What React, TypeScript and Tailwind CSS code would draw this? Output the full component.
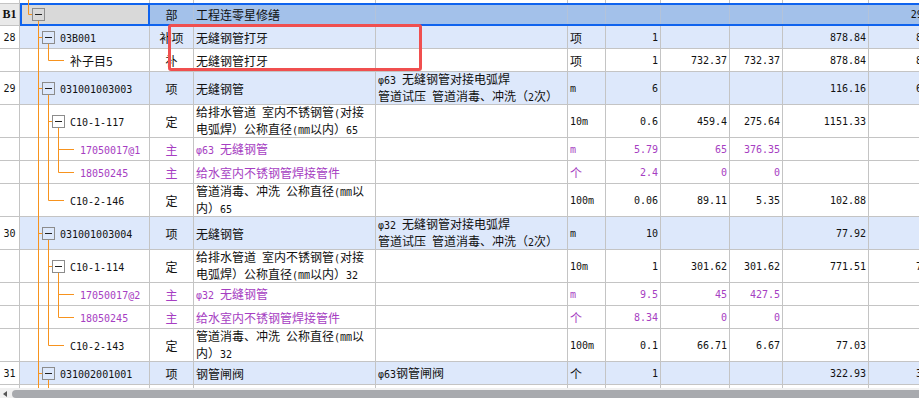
import React from 'react';

type Row = {
  no?: string;
  level: number;
  box?: boolean;
  pass: number[];
  code: string;
  type: string;
  name: string[];
  spec?: string[];
  unit: string;
  qty: string;
  price?: string;
  cost?: string;
  total?: string;
  tail?: string;
  tall?: boolean;
  item?: boolean;
  main?: boolean;
};

const rows: Row[] = [
  { no: '28', level: 1, box: true, pass: [0], code: '03B001', type: '补项', name: ['无缝钢管打牙'], unit: '项', qty: '1', total: '878.84', tail: '878.84', item: true },
  { level: 2, pass: [0], code: '补子目5', type: '补', name: ['无缝钢管打牙'], unit: '项', qty: '1', price: '732.37', cost: '732.37', total: '878.84', tail: '878.84' },
  { no: '29', level: 1, box: true, pass: [0], code: '031001003003', type: '项', name: ['无缝钢管'], spec: ['φ63 无缝钢管对接电弧焊', '管道试压 管道消毒、冲洗（2次）'], unit: 'm', qty: '6', total: '116.16', tail: '696.96', tall: true, item: true },
  { level: 2, box: true, pass: [0, 1], code: 'C10-1-117', type: '定', name: ['给排水管道 室内不锈钢管(对接', '电弧焊）公称直径(㎜以内）65'], unit: '10m', qty: '0.6', price: '459.4', cost: '275.64', total: '1151.33', tail: '690.8', tall: true },
  { level: 3, pass: [0, 1, 2], code: '17050017@1', type: '主', name: ['φ63 无缝钢管'], unit: 'm', qty: '5.79', price: '65', cost: '376.35', main: true },
  { level: 3, pass: [0, 1], code: '18050245', type: '主', name: ['给水室内不锈钢管焊接管件'], unit: '个', qty: '2.4', price: '0', cost: '0', main: true },
  { level: 2, pass: [0], code: 'C10-2-146', type: '定', name: ['管道消毒、冲洗 公称直径(㎜以', '内）65'], unit: '100m', qty: '0.06', price: '89.11', cost: '5.35', total: '102.88', tail: '6.17', tall: true },
  { no: '30', level: 1, box: true, pass: [0], code: '031001003004', type: '项', name: ['无缝钢管'], spec: ['φ32 无缝钢管对接电弧焊', '管道试压 管道消毒、冲洗（2次）'], unit: 'm', qty: '10', total: '77.92', tail: '779.2', tall: true, item: true },
  { level: 2, box: true, pass: [0, 1], code: 'C10-1-114', type: '定', name: ['给排水管道 室内不锈钢管(对接', '电弧焊）公称直径(㎜以内）32'], unit: '10m', qty: '1', price: '301.62', cost: '301.62', total: '771.51', tail: '771.51', tall: true },
  { level: 3, pass: [0, 1, 2], code: '17050017@2', type: '主', name: ['φ32 无缝钢管'], unit: 'm', qty: '9.5', price: '45', cost: '427.5', main: true },
  { level: 3, pass: [0, 1], code: '18050245', type: '主', name: ['给水室内不锈钢管焊接管件'], unit: '个', qty: '8.34', price: '0', cost: '0', main: true },
  { level: 2, pass: [0], code: 'C10-2-143', type: '定', name: ['管道消毒、冲洗 公称直径(㎜以', '内）32'], unit: '100m', qty: '0.1', price: '66.71', cost: '6.67', total: '77.03', tail: '7.7', tall: true },
  { no: '31', level: 1, box: true, pass: [0], code: '031002001001', type: '项', name: ['钢管闸阀'], spec: ['φ63钢管闸阀'], unit: '个', qty: '1', total: '322.93', tail: '322.93', item: true },
];

const ORANGE = '#f7931e';
const indent = ['pl-[30px]', 'pl-[40px]', 'pl-[50px]', 'pl-[60px]'];

// half-width runs get a narrow mono face, like the old bitmap font
function Mix({ text }: { text: string }) {
  return (
    <>
      {text.split(/([\x20-\x7eφ]+)/).map((part, i) =>
        i % 2 === 1 ? (
          <span key={i} className="font-['DejaVu_Sans_Mono',monospace] text-[10px]">
            {part}
          </span>
        ) : (
          part
        ),
      )}
    </>
  );
}

function TreeLines({ level, box, pass, h }: { level: number; box?: boolean; pass: number[]; h: number }) {
  const mid = Math.floor((h - 1) / 2) + 0.5;
  const elbow = 8.5 + level * 10;
  const boxL = 12 + level * 10;
  const end = box ? boxL : 24 + level * 10;
  return (
    <svg className="absolute left-0 top-0" width={130} height={h}>
      {pass.map((k) => (
        <line key={k} x1={18.5 + k * 10} y1={0} x2={18.5 + k * 10} y2={h} stroke={ORANGE} />
      ))}
      <line x1={elbow} y1={0} x2={elbow} y2={mid} stroke={ORANGE} />
      <line x1={elbow} y1={mid} x2={end} y2={mid} stroke={ORANGE} />
      {box && (
        <>
          <line x1={boxL + 6.5} y1={mid + 6} x2={boxL + 6.5} y2={h} stroke={ORANGE} />
          <rect x={boxL + 0.5} y={mid - 6} width={12} height={12} fill="none" stroke="#8c8c8c" />
          <line x1={boxL + 3} y1={mid} x2={boxL + 10} y2={mid} stroke="#222" />
        </>
      )}
    </svg>
  );
}

const cell = 'flex shrink-0 items-center border-r border-b border-[#c4c4c4]';
const num = 'flex shrink-0 items-center justify-end pr-[2px] border-r border-b border-[#c4c4c4]';

function Stub({ lines }: { lines: number[] }) {
  return (
    <div className="flex h-[3px]">
      <div className="w-[20px] shrink-0 border-r border-[#c4c4c4]" />
      <div className="relative w-[130px] shrink-0 border-r border-[#c4c4c4]">
        <svg className="absolute left-0 top-0" width={130} height={3}>
          {lines.map((x) => (
            <line key={x} x1={x} y1={0} x2={x} y2={3} stroke={ORANGE} />
          ))}
        </svg>
      </div>
      <div className="w-[44px] shrink-0 border-r border-[#c4c4c4]" />
      <div className="w-[182px] shrink-0 border-r border-[#c4c4c4]" />
      <div className="w-[192px] shrink-0 border-r border-[#c4c4c4]" />
      <div className="w-[38px] shrink-0 border-r border-[#c4c4c4]" />
      <div className="w-[55px] shrink-0 border-r border-[#c4c4c4]" />
      <div className="w-[69px] shrink-0 border-r border-[#c4c4c4]" />
      <div className="w-[53px] shrink-0 border-r border-[#c4c4c4]" />
      <div className="w-[86px] shrink-0 border-r border-[#c4c4c4]" />
      <div className="w-[86px] shrink-0 border-r border-[#c4c4c4]" />
    </div>
  );
}

function SectionRow() {
  return (
    <div className="flex h-[23px]">
      <div className="flex w-[20px] shrink-0 items-center justify-center border-y border-r border-[#c4c4c4] bg-[#e9e9e9] font-['Liberation_Serif',serif] text-[12px] font-bold">
        B1
      </div>
      <div className="flex border-y-2 border-[#0f63ee] bg-[#a3c1ea]">
        <div className="relative w-[130px] shrink-0 border-x-2 border-[#0f63ee] bg-[#d9d9d9]">
          <svg className="absolute -left-[2px] -top-[2px]" width={130} height={23}>
            <line x1={8.5} y1={0} x2={8.5} y2={11.5} stroke={ORANGE} />
            <line x1={8.5} y1={11.5} x2={12} y2={11.5} stroke={ORANGE} />
            <line x1={18.5} y1={17.5} x2={18.5} y2={23} stroke={ORANGE} />
            <rect x={12.5} y={5.5} width={12} height={12} fill="none" stroke="#8c8c8c" />
            <line x1={15} y1={11.5} x2={22} y2={11.5} stroke="#222" />
          </svg>
        </div>
        <div className="flex w-[44px] shrink-0 items-center justify-center border-r border-[#b3c3da]">部</div>
        <div className="flex w-[182px] shrink-0 items-center border-r border-[#b3c3da] pl-[2px]">工程连零星修缮</div>
        <div className="w-[192px] shrink-0 border-r border-[#b3c3da]" />
        <div className="w-[38px] shrink-0 border-r border-[#b3c3da]" />
        <div className="w-[55px] shrink-0 border-r border-[#b3c3da]" />
        <div className="w-[69px] shrink-0 border-r border-[#b3c3da]" />
        <div className="w-[53px] shrink-0 border-r border-[#b3c3da]" />
        <div className="w-[86px] shrink-0 border-r border-[#b3c3da]" />
        <div className="flex w-[86px] shrink-0 items-center justify-end pr-[2px]">
          <Mix text="2915.04" />
        </div>
      </div>
    </div>
  );
}

export default function App() {
  return (
    <div className="h-[398px] w-[919px] overflow-hidden bg-white font-['Noto_Sans_CJK_SC',sans-serif] text-[12px] leading-[15px] text-[#111]">
      <div className="relative">
        <Stub lines={[8.5]} />
        <SectionRow />
        {rows.map((r, i) => {
          const h = r.tall ? 33 : 23;
          return (
            <div
              key={i}
              className={`flex ${r.tall ? 'h-[33px]' : 'h-[23px]'} ${r.item ? 'bg-[#dde8fb]' : 'bg-white'} ${r.main ? 'text-[#a63ec2]' : ''}`}
            >
              <div className={`${cell} w-[20px] justify-center bg-white text-[#111]`}>
                {r.no && <Mix text={r.no} />}
              </div>
              <div className={`relative flex w-[130px] shrink-0 items-center border-r border-b border-[#c4c4c4] ${indent[r.level]}`}>
                <TreeLines level={r.level} box={r.box} pass={r.pass} h={h} />
                <span className="relative whitespace-nowrap">
                  {r.code === '补子目5' ? r.code : <Mix text={r.code} />}
                </span>
              </div>
              <div className={`${cell} w-[44px] justify-center`}>{r.type}</div>
              <div className={`${cell} w-[182px] flex-col !items-start justify-center pl-[2px] whitespace-nowrap`}>
                {r.name.map((l) => (
                  <div key={l}>
                    <Mix text={l} />
                  </div>
                ))}
              </div>
              <div className={`${cell} w-[192px] flex-col !items-start justify-center pl-[2px] whitespace-nowrap`}>
                {r.spec?.map((l) => (
                  <div key={l}>
                    <Mix text={l} />
                  </div>
                ))}
              </div>
              <div className={`${cell} w-[38px] pl-[2px]`}>
                <Mix text={r.unit} />
              </div>
              <div className={`${num} w-[55px]`}>
                <Mix text={r.qty} />
              </div>
              <div className={`${num} w-[69px]`}>{r.price && <Mix text={r.price} />}</div>
              <div className={`${num} w-[53px]`}>{r.cost && <Mix text={r.cost} />}</div>
              <div className={`${num} w-[86px]`}>{r.total && <Mix text={r.total} />}</div>
              <div className={`${num} w-[86px]`}>{r.tail && <Mix text={r.tail} />}</div>
            </div>
          );
        })}
        <Stub lines={[18.5, 28.5]} />
        <div className="pointer-events-none absolute left-[168px] top-[24px] h-[47px] w-[254px] rounded-[3px] border-[3px] border-[#f04f4f]" />
      </div>
      <div className="flex h-[10px] items-end bg-[#f0f0f0]">
        <div className="flex h-[8px] w-[12px] items-center pl-[3px]">
          <svg width={5} height={6}>
            <polygon points="4,0 4,6 0,3" fill="#555" />
          </svg>
        </div>
        <div className="h-[8px] flex-1 rounded-l-[4px] bg-[#a8aaae]" />
      </div>
    </div>
  );
}
